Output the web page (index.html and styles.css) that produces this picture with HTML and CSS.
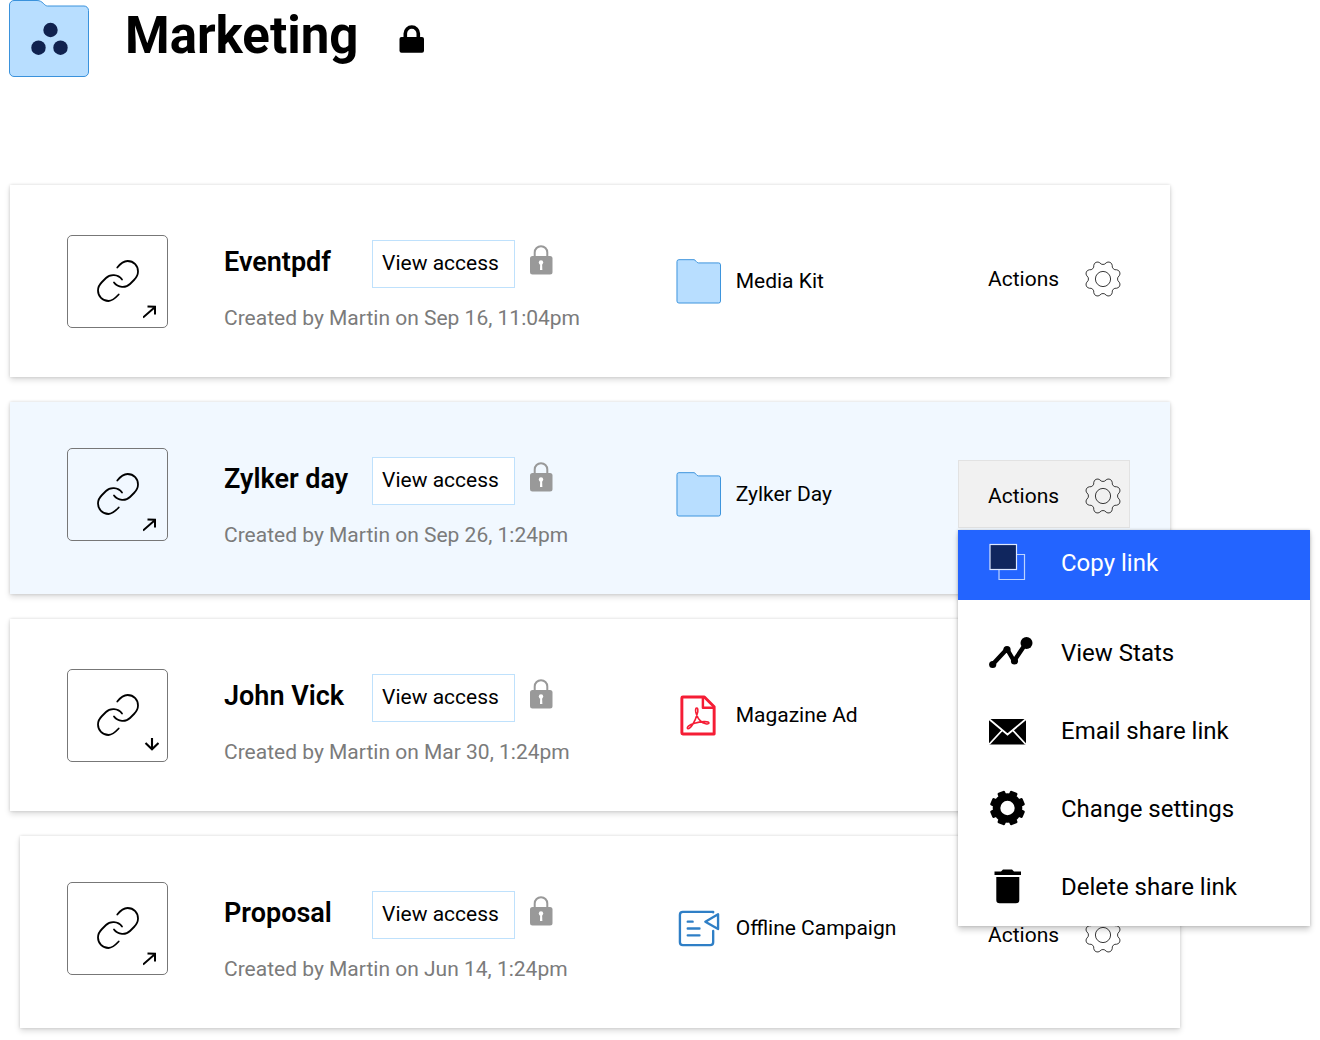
FILE: index.html
```html
<!DOCTYPE html>
<html lang="en">
<head>
<meta charset="utf-8">
<meta name="viewport" content="width=device-width, initial-scale=1">
<title>Marketing</title>
<link rel="stylesheet" href="styles.css">
</head>
<body>
<svg class="sprite" aria-hidden="true">
  <symbol id="link" viewBox="0 0 42 42">
    <g fill="none" stroke="#000" stroke-width="1.8" stroke-linecap="round">
      <path d="M20.3 7.5C23.5 3.5 27 1 30.5 1C37 1 41 6 41 11.5C41 15 39.5 17.5 37 20L33 24C29 28 21 28 17 22.5"/>
      <path d="M25 19.5C21 14 13 14 9 18L5 22C2.5 24.5 1 27 1 30.5C1 36 5.5 41 11.5 41C15 41 18 38.5 21.7 34.5"/>
    </g>
  </symbol>
  <symbol id="arrow-out" viewBox="0 0 16 16">
    <path d="M0 13.500L11.500 3.500M4.500 2.600L12 2.800L12 10.500" fill="none" stroke="#000" stroke-width="2"/>
  </symbol>
  <symbol id="arrow-down" viewBox="0 0 16 16">
    <path d="M9 -3V11M2.500 5L9 11.300L15.500 5" fill="none" stroke="#000" stroke-width="2.100"/>
  </symbol>
  <symbol id="lock" viewBox="0 0 24 30">
    <path d="M5.700 12V7.500a6.300 6.300 0 0 1 12.600 0V12" fill="none" stroke="#999" stroke-width="2"/>
    <rect x="1" y="11" width="22.500" height="18.500" rx="2.500" fill="#999"/>
    <circle cx="12" cy="17.500" r="2.200" fill="#fff"/>
    <path d="M11.200 18h1.800l.4 7h-2.400z" fill="#fff"/>
  </symbol>
  <symbol id="folder" viewBox="0 0 46 46">
    <path d="M3 .7H18.500C20 .7 20.800 4 23 4H43.500a2 2 0 0 1 2 2V43a2 2 0 0 1-2 2H3a2 2 0 0 1-2-2V2.700a2 2 0 0 1 2-2z" fill="#b8deff" stroke="#3a92dc" stroke-width="1"/>
  </symbol>
  <symbol id="gear" viewBox="0 0 40 40">
    <path d="M16.850 3.800A3.800 3.800 0 0 0 23.150 3.800A3.800 3.800 0 0 1 29.230 6.320A3.800 3.800 0 0 0 33.680 10.770A3.800 3.800 0 0 1 36.200 16.850A3.800 3.800 0 0 0 36.200 23.150A3.800 3.800 0 0 1 33.680 29.230A3.800 3.800 0 0 0 29.230 33.680A3.800 3.800 0 0 1 23.150 36.200A3.800 3.800 0 0 0 16.850 36.200A3.800 3.800 0 0 1 10.770 33.680A3.800 3.800 0 0 0 6.320 29.230A3.800 3.800 0 0 1 3.800 23.150A3.800 3.800 0 0 0 3.800 16.850A3.800 3.800 0 0 1 6.320 10.770A3.800 3.800 0 0 0 10.770 6.320A3.800 3.800 0 0 1 16.850 3.800z" fill="none" stroke="#222" stroke-width=".9"/>
    <circle cx="20" cy="20" r="7.600" fill="none" stroke="#222" stroke-width=".9"/>
  </symbol>
</svg>

<header class="header">
  <svg class="header-folder" viewBox="0 0 80 77" aria-hidden="true">
    <path d="M5 .5H28C34 .5 35 6 38.500 6H75a4.500 4.500 0 0 1 4.500 4.500V72a4.500 4.500 0 0 1-4.500 4.500H5A4.500 4.500 0 0 1 .5 72V5A4.500 4.500 0 0 1 5 .5z" fill="#b8deff" stroke="#3a92dc"/>
    <g fill="#10224f"><circle cx="41.500" cy="30" r="7.200"/><circle cx="29.500" cy="47.700" r="7.200"/><circle cx="51.500" cy="47.700" r="7.200"/></g>
  </svg>
  <h1 class="header-title">Marketing</h1>
  <svg class="header-lock" viewBox="0 0 26 28" role="img" aria-label="Private">
    <path d="M6.300 14V8.500a6.500 6.500 0 0 1 13 0V14" fill="none" stroke="#000" stroke-width="3.600"/>
    <rect x=".5" y="12" width="24.500" height="15.800" rx="2" fill="#000"/>
  </svg>
</header>

<main class="list">
  <article class="card">
    <div class="thumb"><svg class="thumb-link"><use href="#link"/></svg><svg class="thumb-badge"><use href="#arrow-out"/></svg></div>
    <div class="info">
      <div class="info-top">
        <h2 class="name">Eventpdf</h2>
        <button class="access" type="button">View access</button>
        <svg class="lock"><use href="#lock"/></svg>
      </div>
      <p class="created">Created by Martin on Sep 16, 11:04pm</p>
    </div>
    <div class="file"><svg class="file-icon"><use href="#folder"/></svg><span>Media Kit</span></div>
    <div class="actions"><button class="actions-button" type="button">Actions<svg class="gear"><use href="#gear"/></svg></button></div>
  </article>

  <article class="card card--active card--raised">
    <div class="thumb"><svg class="thumb-link"><use href="#link"/></svg><svg class="thumb-badge"><use href="#arrow-out"/></svg></div>
    <div class="info">
      <div class="info-top">
        <h2 class="name">Zylker day</h2>
        <button class="access" type="button">View access</button>
        <svg class="lock"><use href="#lock"/></svg>
      </div>
      <p class="created">Created by Martin on Sep 26, 1:24pm</p>
    </div>
    <div class="file"><svg class="file-icon"><use href="#folder"/></svg><span>Zylker Day</span></div>
    <div class="actions">
      <button class="actions-button actions-button--open" type="button" aria-expanded="true" aria-controls="actions-menu">Actions<svg class="gear"><use href="#gear"/></svg></button>
      <div class="menu" id="actions-menu">
        <button class="menu-item menu-item--selected" type="button">
          <svg class="menu-icon" viewBox="0 0 44 40" aria-hidden="true"><path d="M28 11.500H35.500V36.500H10V27" fill="none" stroke="#bcd3ff" stroke-width="1.200"/><rect x="1" y="1.500" width="26.500" height="25" fill="#10265e" stroke="#dce7ff" stroke-width="1.200"/></svg>
          Copy link
        </button>
        <div class="menu-group">
          <button class="menu-item" type="button">
            <svg class="menu-icon" viewBox="0 0 44 40" aria-hidden="true"><path d="M3.500 31.500L18 16L25 28L37.500 9.500" fill="none" stroke="#000" stroke-width="4.400" stroke-linejoin="round"/><circle cx="3.700" cy="31.500" r="3.600"/><circle cx="18" cy="16.500" r="3.600"/><circle cx="25.500" cy="28" r="3.600"/><circle cx="37.500" cy="10" r="6"/></svg>
            View Stats
          </button>
          <button class="menu-item" type="button">
            <svg class="menu-icon" viewBox="0 0 44 40" aria-hidden="true"><rect y="8" width="37" height="25.500"/><path d="M0 8L18.500 23.500L37 8M0 33.500L13 19.500M37 33.500L24 19.500" fill="none" stroke="#fff" stroke-width="1.800"/></svg>
            Email share link
          </button>
          <button class="menu-item" type="button">
            <svg class="menu-icon" viewBox="0 0 44 40" aria-hidden="true">
              <circle cx="18.500" cy="19" r="14.800"/>
              <rect x="14.500" y="1.500" width="8" height="35" rx="1.500" transform="rotate(22.500 18.500 19)"/>
              <rect x="14.500" y="1.500" width="8" height="35" rx="1.500" transform="rotate(67.500 18.500 19)"/>
              <rect x="14.500" y="1.500" width="8" height="35" rx="1.500" transform="rotate(112.500 18.500 19)"/>
              <rect x="14.500" y="1.500" width="8" height="35" rx="1.500" transform="rotate(157.500 18.500 19)"/>
              <circle cx="18.500" cy="19" r="7.200" fill="#fff"/>
            </svg>
            Change settings
          </button>
          <button class="menu-item" type="button">
            <svg class="menu-icon" viewBox="0 0 44 40" aria-hidden="true"><path d="M5.500 4.500H12L14 2.500H23L25 4.500H32V8H5.500zM7.300 10H30.300V33a3.300 3.300 0 0 1-3.300 3.300H10.600a3.300 3.300 0 0 1-3.300-3.300z"/></svg>
            Delete share link
          </button>
        </div>
      </div>
    </div>
  </article>

  <article class="card">
    <div class="thumb"><svg class="thumb-link"><use href="#link"/></svg><svg class="thumb-badge"><use href="#arrow-down"/></svg></div>
    <div class="info">
      <div class="info-top">
        <h2 class="name">John Vick</h2>
        <button class="access" type="button">View access</button>
        <svg class="lock"><use href="#lock"/></svg>
      </div>
      <p class="created">Created by Martin on Mar 30, 1:24pm</p>
    </div>
    <div class="file">
      <svg class="file-icon" viewBox="0 0 46 46" aria-hidden="true"><g fill="none" stroke="#f51d35" stroke-linejoin="round"><path d="M7 4H29L39 14V42H7a1 1 0 0 1-1-1V5a1 1 0 0 1 1-1z" stroke-width="3"/><path d="M27.500 4V15H39" stroke-width="2.500"/><path d="M20.500 15.500C22.500 14.500 23 18 21.500 22C20 28 15 37 12 36.500C10.500 35.500 13 32.500 19 31C25 29 33.500 28.500 33.700 30.700C33.500 32.500 28 31.500 25 28.500C21.500 25.500 19 18 20.500 15.500z" stroke-width="1.600"/></g></svg>
      <span>Magazine Ad</span>
    </div>
    <div class="actions"><button class="actions-button" type="button">Actions<svg class="gear"><use href="#gear"/></svg></button></div>
  </article>

  <article class="card card--raised card--inset">
    <div class="thumb"><svg class="thumb-link"><use href="#link"/></svg><svg class="thumb-badge"><use href="#arrow-out"/></svg></div>
    <div class="info">
      <div class="info-top">
        <h2 class="name">Proposal</h2>
        <button class="access" type="button">View access</button>
        <svg class="lock"><use href="#lock"/></svg>
      </div>
      <p class="created">Created by Martin on Jun 14, 1:24pm</p>
    </div>
    <div class="file">
      <svg class="file-icon" viewBox="0 0 46 46" aria-hidden="true"><g fill="none" stroke="#2f7fc6" stroke-width="2.400" stroke-linecap="round" stroke-linejoin="round"><path d="M38 6.500V6H7a3 3 0 0 0-3 3V37a3 3 0 0 0 3 3H35a3 3 0 0 0 3-3V25.500"/><path d="M43 8.500V23.500L30 16z"/><path d="M12 16H17M12 23H24M12 30H24"/></g></svg>
      <span>Offline Campaign</span>
    </div>
    <div class="actions"><button class="actions-button" type="button">Actions<svg class="gear"><use href="#gear"/></svg></button></div>
  </article>
</main>
</body>
</html>
```
FILE: styles.css
```css
* {
  box-sizing: border-box;
}

body {
  margin: 0;
  background: #fff;
  color: #000;
  font-family: "Roboto", "Liberation Sans", sans-serif;
  font-size: 21px;
  line-height: 28px;
}

button {
  margin: 0;
  padding: 0;
  border: 0;
  background: none;
  color: inherit;
  font: inherit;
  cursor: pointer;
}

h1, h2, p {
  margin: 0;
}

.sprite {
  position: absolute;
  width: 0;
  height: 0;
}

/* Page header */
.header {
  display: flex;
  align-items: flex-start;
  padding-left: 9px;
}

.header-folder {
  width: 80px;
  height: 77px;
}

.header-title {
  margin: 0 41px 0 36px;
  font-size: 51px;
  font-weight: 700;
  line-height: 72px;
}

.header-lock {
  width: 26px;
  height: 28px;
  margin-top: 25px;
}

/* Shared links */
.list {
  display: flex;
  flex-direction: column;
  gap: 25px;
  margin: 108px 150px 12px 10px;
}

.card {
  display: grid;
  grid-template-columns: 157px minmax(0, 8fr) minmax(0, 5fr) 172px;
  align-items: center;
  height: 192px;
  padding: 0 40px 0 57px;
  background: #fff;
  box-shadow: 0 0 3px rgba(0, 0, 0, .14), 0 3px 6px rgba(0, 0, 0, .14);
}

.card--active {
  background: #f1f8ff;
}

.card--inset {
  margin: 0 -10px 0 10px;
  padding: 0 50px 0 47px;
}

.thumb {
  position: relative;
  display: grid;
  place-items: center;
  width: 101px;
  height: 93px;
  border: 1px solid #777;
  border-radius: 5px;
}

.thumb-link {
  width: 42px;
  height: 42px;
}

.thumb-badge {
  position: absolute;
  right: 8px;
  bottom: 7px;
  width: 16px;
  height: 16px;
  overflow: visible;
}

.card--raised .thumb,
.card--raised .file {
  margin-bottom: 8px;
}

.info {
  padding-top: 10px;
}

.info-top {
  display: flex;
  align-items: center;
}

.name {
  width: 148px;
  padding-bottom: 4px;
  font-size: 27px;
  font-weight: 600;
  line-height: 32px;
}

.access {
  width: 143px;
  height: 48px;
  padding: 0 6px 2px 0;
  border: 1px solid #bfe1fc;
  background: #fff;
}

.lock {
  width: 24px;
  height: 30px;
  margin: 0 0 8px 14px;
}

.created {
  margin-top: 16px;
  color: #7b7b7b;
}

.file {
  display: flex;
  align-items: center;
  gap: 15px;
}

.file-icon {
  flex: none;
  width: 45px;
  height: 45px;
}

/* Actions and their menu */
.actions {
  position: relative;
  margin-bottom: 8px;
}

.card--inset .actions {
  margin-top: 10px;
}

.actions-button {
  display: flex;
  align-items: center;
  justify-content: space-between;
  width: 100%;
  height: 68px;
  padding: 4px 6px 0 29px;
  border: 1px solid transparent;
}

.actions-button--open {
  border-color: #e2e2e2;
  background: #f1f1f1;
}

.gear {
  width: 40px;
  height: 40px;
}

.menu {
  position: absolute;
  z-index: 1;
  top: 70px;
  left: 0;
  width: 352px;
  background: #fff;
  box-shadow: 0 0 3px rgba(0, 0, 0, .2), 0 4px 6px rgba(0, 0, 0, .18);
}

.menu-group {
  padding-top: 14px;
}

.menu-item {
  display: flex;
  align-items: center;
  gap: 28px;
  width: 100%;
  height: 78px;
  padding: 0 31px;
  font-size: 24px;
  text-align: left;
}

.menu-item--selected {
  height: 70px;
  padding-bottom: 4px;
  background: #2364ff;
  color: #fff;
}

.menu-icon {
  flex: none;
  width: 44px;
  height: 40px;
}
```
